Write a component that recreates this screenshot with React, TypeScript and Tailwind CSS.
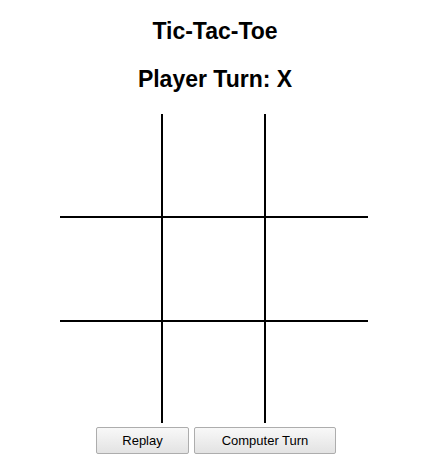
import { useState } from 'react';

type Cell = 'X' | 'O' | null;

const lines = [
    [0, 1, 2], [3, 4, 5], [6, 7, 8],
    [0, 3, 6], [1, 4, 7], [2, 5, 8],
    [0, 4, 8], [2, 4, 6],
];

function winnerOf(board: Cell[]): Cell {
    for (const [a, b, c] of lines) {
        if (board[a] && board[a] === board[b] && board[a] === board[c]) return board[a];
    }
    return null;
}

export default function App() {
    const [board, setBoard] = useState<Cell[]>(Array(9).fill(null));
    const [turn, setTurn] = useState<'X' | 'O'>('X');

    const play = (i: number) => {
        if (board[i] || winnerOf(board)) return;
        const next = [...board];
        next[i] = turn;
        setBoard(next);
        setTurn(turn === 'X' ? 'O' : 'X');
    };

    const computerTurn = () => {
        const free = board.map((c, i) => (c ? -1 : i)).filter((i) => i >= 0);
        if (free.length === 0 || winnerOf(board)) return;
        play(free[Math.floor(Math.random() * free.length)]);
    };

    const replay = () => {
        setBoard(Array(9).fill(null));
        setTurn('X');
    };

    return (
        <div className="w-[435px] h-[476px] bg-white pt-[18px] pr-[5px] flex flex-col items-center font-['Liberation_Sans',Arial,sans-serif] text-black">
            {/* Títulos */}
            <h1 className="text-[23px] leading-[26px] font-bold">Tic-Tac-Toe</h1>
            <h2 className="mt-[22px] text-[23px] leading-[26px] font-bold">Player Turn: {turn}</h2>

            {/* Tablero */}
            <div className="mt-[22px] mr-[2px] grid grid-cols-[101px_101px_102px] grid-rows-[102px_102px_101px] gap-[2px] bg-black">
                {board.map((cell, i) => (
                    <button
                        key={i}
                        onClick={() => play(i)}
                        className="bg-white flex items-center justify-center text-[60px] font-bold leading-none"
                    >
                        {cell}
                    </button>
                ))}
            </div>

            {/* Controles */}
            <div className="mt-[4px] ml-[2px] flex gap-[5px]">
                <button
                    onClick={replay}
                    className="w-[93px] h-[27px] text-[13px] border border-[#adadad] rounded-[2px] bg-gradient-to-b from-[#f8f8f8] to-[#e3e3e3]"
                >
                    Replay
                </button>
                <button
                    onClick={computerTurn}
                    className="w-[142px] h-[27px] text-[13px] border border-[#adadad] rounded-[2px] bg-gradient-to-b from-[#f8f8f8] to-[#e3e3e3]"
                >
                    Computer Turn
                </button>
            </div>
        </div>
    );
}
